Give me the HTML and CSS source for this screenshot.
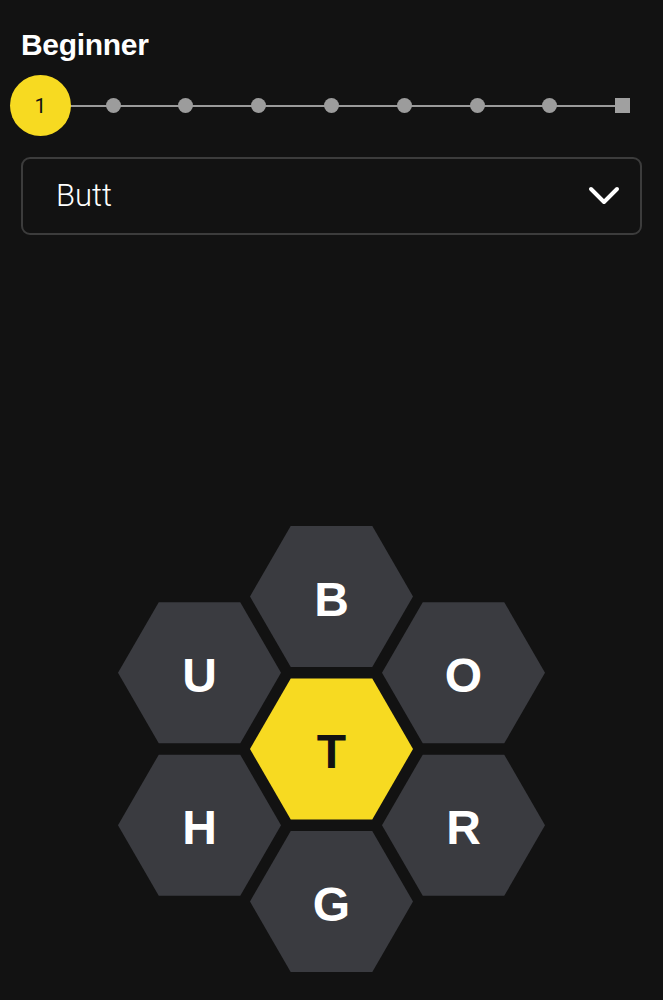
FILE: index.html
```html
<!DOCTYPE html>
<html lang="en">
<head>
    <meta charset="UTF-8">
    <meta name="viewport" content="width=device-width, initial-scale=1.0">
    <title>Spelling Bee - Beginner</title>
    <link rel="stylesheet" href="styles.css">
</head>
<body>
    <div class="page">

        <!-- Rank heading -->
        <h1 class="rank-title">Beginner</h1>

        <!-- Rank progress track -->
        <div class="progress">
            <span class="step"><span class="current">1</span></span>
            <span class="step"><i class="dot"></i></span>
            <span class="step"><i class="dot"></i></span>
            <span class="step"><i class="dot"></i></span>
            <span class="step"><i class="dot"></i></span>
            <span class="step"><i class="dot"></i></span>
            <span class="step"><i class="dot"></i></span>
            <span class="step"><i class="dot"></i></span>
            <span class="step"><i class="square"></i></span>
        </div>

        <!-- Found words dropdown -->
        <div class="word-select">
            <span class="word-select-label">Butt</span>
            <svg class="chevron" width="34" height="22" viewBox="0 0 34 22">
                <polyline points="4,4 17,17 30,4" fill="none" stroke="#fff" stroke-width="4" stroke-linecap="round" stroke-linejoin="round"/>
            </svg>
        </div>

        <!-- Hive -->
        <svg class="hive" width="427" height="446" viewBox="-213.5 -223 427 446">
            <g transform="translate(0,0)">
                <polygon class="cell center-cell" points="-81.5,0 -40.75,-70.6 40.75,-70.6 81.5,0 40.75,70.6 -40.75,70.6"/>
                <text class="letter center-letter" x="0" y="19">T</text>
            </g>
            <g transform="translate(0,-152.5)">
                <polygon class="cell" points="-81.5,0 -40.75,-70.6 40.75,-70.6 81.5,0 40.75,70.6 -40.75,70.6"/>
                <text class="letter" x="0" y="19">B</text>
            </g>
            <g transform="translate(132,-76.25)">
                <polygon class="cell" points="-81.5,0 -40.75,-70.6 40.75,-70.6 81.5,0 40.75,70.6 -40.75,70.6"/>
                <text class="letter" x="0" y="19">O</text>
            </g>
            <g transform="translate(132,76.25)">
                <polygon class="cell" points="-81.5,0 -40.75,-70.6 40.75,-70.6 81.5,0 40.75,70.6 -40.75,70.6"/>
                <text class="letter" x="0" y="19">R</text>
            </g>
            <g transform="translate(0,152.5)">
                <polygon class="cell" points="-81.5,0 -40.75,-70.6 40.75,-70.6 81.5,0 40.75,70.6 -40.75,70.6"/>
                <text class="letter" x="0" y="19">G</text>
            </g>
            <g transform="translate(-132,76.25)">
                <polygon class="cell" points="-81.5,0 -40.75,-70.6 40.75,-70.6 81.5,0 40.75,70.6 -40.75,70.6"/>
                <text class="letter" x="0" y="19">H</text>
            </g>
            <g transform="translate(-132,-76.25)">
                <polygon class="cell" points="-81.5,0 -40.75,-70.6 40.75,-70.6 81.5,0 40.75,70.6 -40.75,70.6"/>
                <text class="letter" x="0" y="19">U</text>
            </g>
        </svg>

    </div>
</body>
</html>
```

FILE: styles.css
```css
/* General Page Styles */
body, html {
    margin: 0;
    background-color: #121212;
    color: #fff;
    font-family: "Liberation Sans", Arial, sans-serif;
}

.page {
    padding: 28px 21px 0 21px;
}

/* Rank heading */
.rank-title {
    margin: 0;
    font-size: 30px;
    line-height: 34px;
    font-weight: 700;
    letter-spacing: -0.3px;
}

/* Progress track */
.progress {
    position: relative;
    display: grid;
    grid-template-columns: repeat(9, 1fr);
    align-items: center;
    justify-items: center;
    height: 61px;
    margin: 13px -17px 0 -17px;
}

.progress::before {
    content: "";
    position: absolute;
    left: calc(100% / 18);
    right: calc(100% / 18);
    top: 50%;
    height: 2px;
    margin-top: -1px;
    background-color: #9a9a9a;
}

.step {
    position: relative;
    z-index: 1;
    display: flex;
    align-items: center;
    justify-content: center;
}

.current {
    display: flex;
    align-items: center;
    justify-content: center;
    width: 61px;
    height: 61px;
    border-radius: 50%;
    background-color: #f7da21;
    color: #121212;
    font-family: Roboto, sans-serif;
    font-weight: 400;
    font-size: 21px;
}

.dot {
    display: block;
    width: 15px;
    height: 15px;
    border-radius: 50%;
    background-color: #9c9c9c;
}

.square {
    display: block;
    width: 15px;
    height: 15px;
    background-color: #a0a0a0;
}

/* Word list dropdown */
.word-select {
    display: flex;
    align-items: center;
    justify-content: space-between;
    box-sizing: border-box;
    height: 78px;
    margin-top: 21px;
    padding: 0 19px 0 33px;
    border: 2px solid #3c3c3c;
    border-radius: 9px;
}

.word-select-label {
    font-family: Roboto, sans-serif;
    font-weight: 300;
    font-size: 31px;
    line-height: 30px;
}

.chevron {
    display: block;
}

/* Hive */
.hive {
    display: block;
    margin: 291px auto 0 auto;
}

.cell {
    fill: #3a3b40;
}

.center-cell {
    fill: #f7da21;
}

.letter {
    fill: #fff;
    font-family: "Liberation Sans", Arial, sans-serif;
    font-weight: 700;
    font-size: 48px;
    text-anchor: middle;
}

.center-letter {
    fill: #121212;
}
```
